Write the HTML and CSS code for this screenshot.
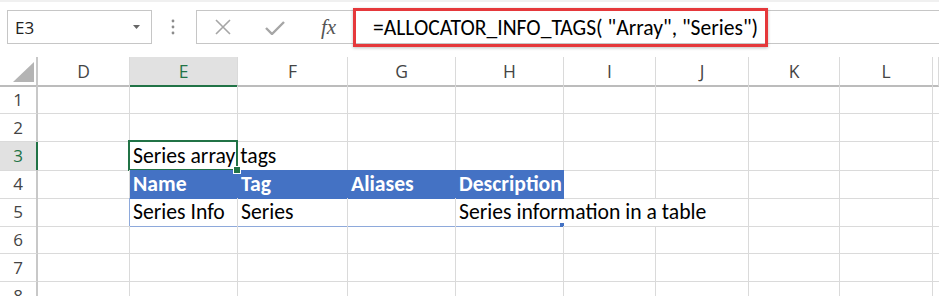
FILE: index.html
```html
<!DOCTYPE html>
<html lang="en">
<head>
  <meta charset="UTF-8" />
  <title>Allocator info tags</title>
  <link rel="stylesheet" href="styles.css">
</head>
<body>
  <div class="toolbar">
    <div class="namebox">
      <span>E3</span>
      <svg class="caret" width="8" height="5" viewBox="0 0 8 5"><path d="M0 0 H7 L3.5 4 Z" fill="#666"/></svg>
    </div>
    <svg class="dots" width="4" height="16" viewBox="0 0 4 16">
      <circle cx="2" cy="2" r="1.4" fill="#8c8c8c"/>
      <circle cx="2" cy="8" r="1.4" fill="#8c8c8c"/>
      <circle cx="2" cy="14" r="1.4" fill="#8c8c8c"/>
    </svg>
    <div class="formula-box">
      <div class="fb-icons">
        <svg width="16" height="16" viewBox="0 0 16 16"><path d="M1 1 L15 15 M15 1 L1 15" stroke="#a6a6a6" stroke-width="1.6" fill="none"/></svg>
        <svg width="20" height="14" viewBox="0 0 20 14"><path d="M1 7 L7 13 L19 1" stroke="#a6a6a6" stroke-width="2.4" fill="none"/></svg>
        <span class="fx">fx</span>
      </div>
      <div class="formula-annot">=ALLOCATOR_INFO_TAGS( "Array", "Series")</div>
    </div>
  </div>

  <div class="sheet">
    <div class="row head">
      <div class="rh corner"><svg width="21" height="20" viewBox="0 0 21 20"><path d="M21 0 V20 H0 Z" fill="#b4b4b4"/></svg></div>
      <div class="ch">D</div><div class="ch active">E</div><div class="ch">F</div><div class="ch">G</div><div class="ch">H</div>
      <div class="ch">I</div><div class="ch">J</div><div class="ch">K</div><div class="ch">L</div><div class="ch"></div>
    </div>
    <div class="row">
      <div class="rh">1</div>
      <div class="c"></div><div class="c"></div><div class="c"></div><div class="c"></div><div class="c"></div>
      <div class="c"></div><div class="c"></div><div class="c"></div><div class="c"></div><div class="c"></div>
    </div>
    <div class="row">
      <div class="rh">2</div>
      <div class="c"></div><div class="c"></div><div class="c"></div><div class="c"></div><div class="c"></div>
      <div class="c"></div><div class="c"></div><div class="c"></div><div class="c"></div><div class="c"></div>
    </div>
    <div class="row">
      <div class="rh active">3</div>
      <div class="c"></div>
      <div class="c selected"><span class="txt">Series array tags</span><span class="handle"></span></div>
      <div class="c"></div><div class="c"></div><div class="c"></div>
      <div class="c"></div><div class="c"></div><div class="c"></div><div class="c"></div><div class="c"></div>
    </div>
    <div class="row">
      <div class="rh">4</div>
      <div class="c"></div>
      <div class="c th">Name</div><div class="c th">Tag</div><div class="c th">Aliases</div><div class="c th">Description</div>
      <div class="c"></div><div class="c"></div><div class="c"></div><div class="c"></div><div class="c"></div>
    </div>
    <div class="row">
      <div class="rh">5</div>
      <div class="c"></div>
      <div class="c td first">Series Info</div><div class="c td">Series</div><div class="c td"></div>
      <div class="c td last"><span class="txt">Series information in a table</span><span class="resize"></span></div>
      <div class="c no-grid"></div><div class="c"></div><div class="c"></div><div class="c"></div><div class="c"></div>
    </div>
    <div class="row">
      <div class="rh">6</div>
      <div class="c"></div><div class="c"></div><div class="c"></div><div class="c"></div><div class="c"></div>
      <div class="c"></div><div class="c"></div><div class="c"></div><div class="c"></div><div class="c"></div>
    </div>
    <div class="row">
      <div class="rh">7</div>
      <div class="c"></div><div class="c"></div><div class="c"></div><div class="c"></div><div class="c"></div>
      <div class="c"></div><div class="c"></div><div class="c"></div><div class="c"></div><div class="c"></div>
    </div>
    <div class="row">
      <div class="rh">8</div>
      <div class="c"></div><div class="c"></div><div class="c"></div><div class="c"></div><div class="c"></div>
      <div class="c"></div><div class="c"></div><div class="c"></div><div class="c"></div><div class="c"></div>
    </div>
  </div>
</body>
</html>
```
FILE: styles.css
```css
body {
  margin: 0;
  background: #fff;
  overflow: hidden;
  font-family: Carlito, Lato, "Liberation Sans", sans-serif;
  color: #000;
}

/* formula bar */
.toolbar {
  height: 57px;
  box-sizing: border-box;
  display: flex;
  align-items: flex-start;
  padding-top: 8px;
  border-top: 2px solid #f0f0f0;
}
.namebox {
  margin-left: 7px;
  width: 145px;
  height: 34px;
  box-sizing: border-box;
  border: 1px solid #c6c6c6;
  display: flex;
  align-items: center;
  justify-content: space-between;
  padding: 0 10px 0 7px;
  font-family: "Open Sans", sans-serif;
  font-size: 17px;
  color: #222;
}
.dots {
  margin: 9px 21px 0 19px;
}
.formula-box {
  flex: 1;
  margin-right: -2px;
  height: 34px;
  box-sizing: border-box;
  border: 1px solid #c6c6c6;
  display: flex;
  align-items: center;
}
.fb-icons {
  width: 156px;
  display: flex;
  align-items: center;
  padding-left: 18px;
  box-sizing: border-box;
}
.fb-icons svg:nth-child(2) { margin-left: 34px; margin-top: 2px; }
.fx {
  margin-left: 36px;
  font-family: "Liberation Serif", serif;
  font-style: italic;
  font-size: 21px;
  color: #555;
}
.formula-annot {
  height: 39px;
  box-sizing: border-box;
  border: 3px solid #e5383b;
  box-shadow: 0 1px 3px rgba(0,0,0,0.25);
  padding: 0 7px 0 17px;
  display: flex;
  align-items: center;
  font-size: 21.6px;
  white-space: nowrap;
}

/* grid */
.row {
  display: grid;
  grid-template-columns: 38px 92px 108px 110px 108px 108px 92px 93px 91px 93px 1fr;
  height: 28px;
}
.row.head { height: 29px; }
.rh, .ch, .c {
  box-sizing: border-box;
  border-right: 1px solid #dadada;
  border-bottom: 1px solid #dadada;
  position: relative;
}
.rh {
  border-right: 2px solid #c8c8c8;
  text-align: center;
  font-family: "Open Sans", sans-serif;
  font-size: 17px;
  line-height: 27px;
  color: #444;
}
.rh.active {
  background: #e1e1e1;
  border-right-color: #217346;
  color: #217346;
}
.corner {
  display: flex;
  justify-content: flex-end;
  align-items: flex-end;
  padding: 0 2px 3px 0;
  border-bottom: 2px solid #bcbcbc;
}
.ch {
  text-align: center;
  border-bottom: 2px solid #bcbcbc;
  font-family: "Open Sans", sans-serif;
  font-size: 17.5px;
  line-height: 28px;
  color: #444;
}
.ch.active {
  background: #e1e1e1;
  border-bottom-color: #217346;
  color: #217346;
}
.c {
  padding: 0 3px;
  font-size: 21.7px;
  line-height: 28px;
  white-space: nowrap;
}
.txt {
  position: relative;
  z-index: 2;
}
.selected::after {
  content: "";
  position: absolute;
  left: -2px;
  top: -2px;
  right: -1px;
  bottom: -1px;
  border: 2px solid #217346;
}
.handle {
  position: absolute;
  right: -4px;
  bottom: -4px;
  width: 6px;
  height: 6px;
  background: #217346;
  border: 1px solid #fff;
  z-index: 3;
}
.th {
  background: #4472c4;
  border-right-color: #4472c4;
  border-bottom-color: #4472c4;
  color: #fff;
  font-weight: bold;
}
.td {
  border-bottom-color: #8ea9db;
}
.td.first::before {
  content: "";
  position: absolute;
  left: -1px;
  top: 0;
  bottom: -1px;
  border-left: 1px solid #8ea9db;
}
.td.last { border-right-color: transparent; }
.no-grid { border-right-color: transparent; }
.resize {
  position: absolute;
  right: -1px;
  bottom: -1px;
  width: 4px;
  height: 4px;
  background: #4472c4;
}
```
